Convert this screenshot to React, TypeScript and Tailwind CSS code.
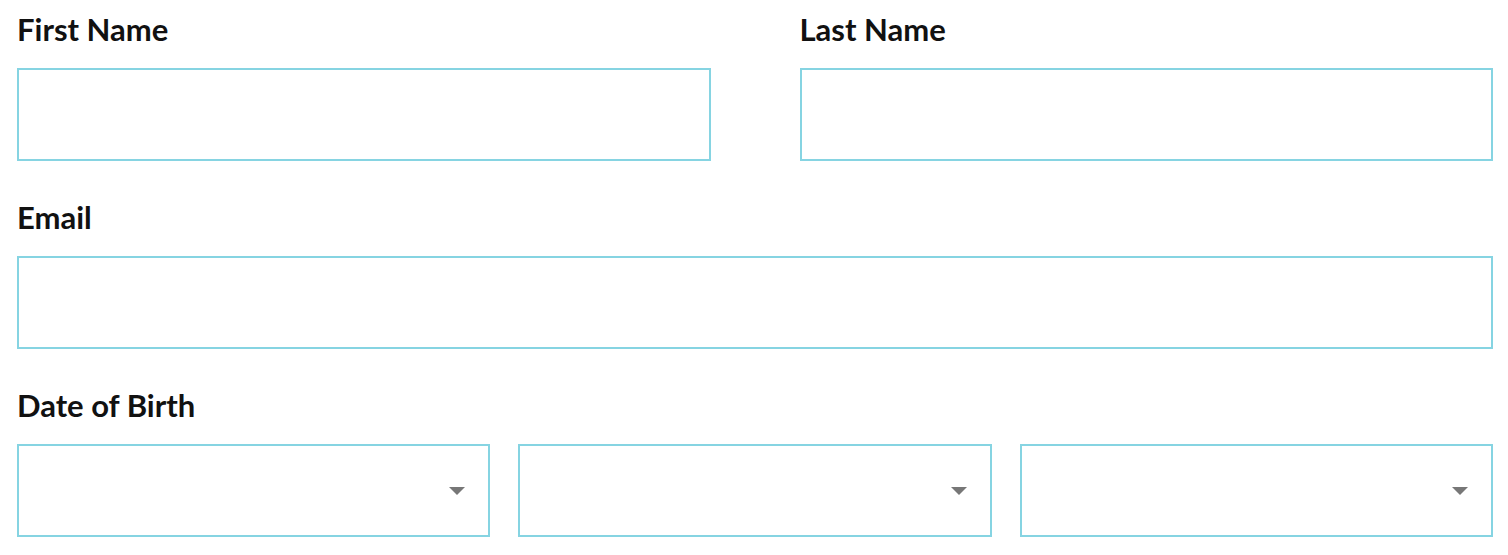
const Label = ({ children }: { children: React.ReactNode }) => (
  <label className="mb-[23px] block text-[31px] font-bold leading-[32px] text-[#111]">
    {children}
  </label>
);

const Field = () => (
  <div className="h-[93px] w-full border-2 border-[#86d4e2] bg-white" />
);

const SelectBox = () => (
  <div className="flex h-[93px] w-full items-center justify-end border-2 border-[#86d4e2] bg-white pr-[23px]">
    <svg width="16" height="8" viewBox="0 0 16 8">
      <path d="M0 0H16L8 8Z" fill="#777" />
    </svg>
  </div>
);

const App = () => {
  return (
    <main
      className="flex min-h-[555px] w-full flex-col gap-[40px] bg-white pl-[17px] pr-[15px] pt-[13px]"
      style={{ fontFamily: "Lato, 'Liberation Sans', sans-serif" }}
    >
      {/* 이름 */}
      <div className="grid grid-cols-2 gap-x-[89px]">
        <div>
          <Label>First Name</Label>
          <Field />
        </div>
        <div>
          <Label>Last Name</Label>
          <Field />
        </div>
      </div>
      {/* 이메일 */}
      <div>
        <Label>Email</Label>
        <Field />
      </div>
      {/* 생년월일 */}
      <div>
        <Label>Date of Birth</Label>
        <div className="grid grid-cols-3 gap-x-[28px]">
          <SelectBox />
          <SelectBox />
          <SelectBox />
        </div>
      </div>
    </main>
  );
};

export default App;
